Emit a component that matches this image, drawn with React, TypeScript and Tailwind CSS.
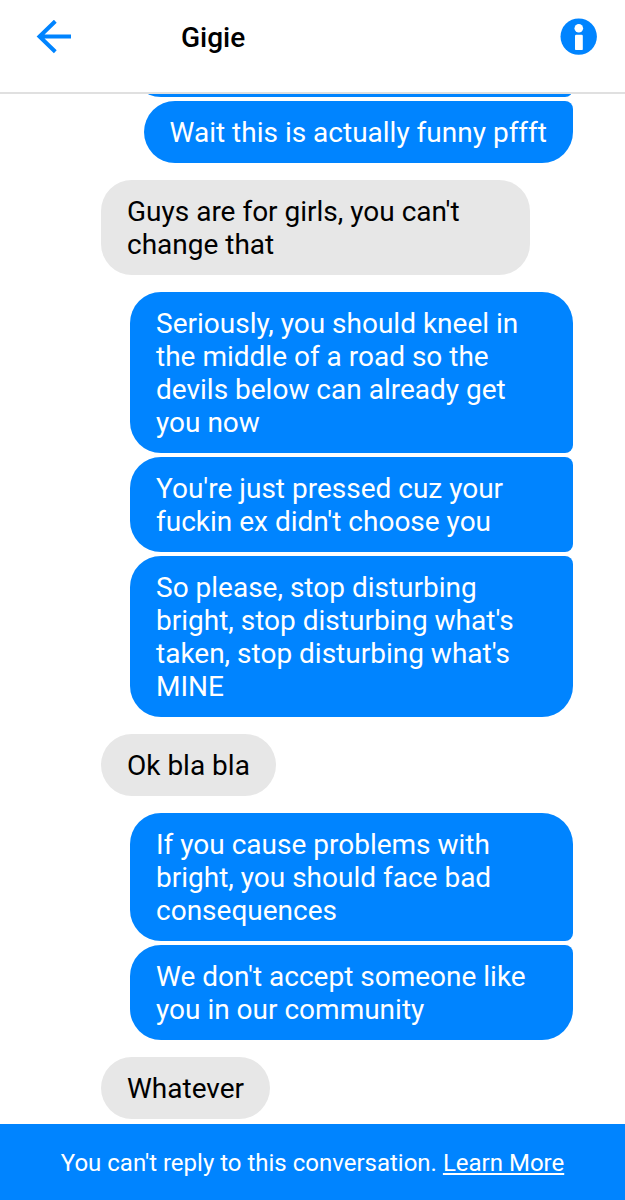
interface Message {
    id: number;
    from: 'me' | 'them';
    text: string;
}

const messages: Message[] = [
    { id: 1, from: 'me', text: 'Wait this is actually funny pffft' },
    { id: 2, from: 'them', text: "Guys are for girls, you can't change that" },
    { id: 3, from: 'me', text: 'Seriously, you should kneel in the middle of a road so the devils below can already get you now' },
    { id: 4, from: 'me', text: "You're just pressed cuz your fuckin ex didn't choose you" },
    { id: 5, from: 'me', text: "So please, stop disturbing bright, stop disturbing what's taken, stop disturbing what's MINE" },
    { id: 6, from: 'them', text: 'Ok bla bla' },
    { id: 7, from: 'me', text: 'If you cause problems with bright, you should face bad consequences' },
    { id: 8, from: 'me', text: "We don't accept someone like you in our community" },
    { id: 9, from: 'them', text: 'Whatever' },
];

function Bubble({ message, joinsPrev, joinsNext }: { message: Message; joinsPrev: boolean; joinsNext: boolean }) {
    if (message.from === 'them') {
        return (
            <li className="mt-[17px] max-w-[429px] self-start rounded-[31px] bg-[#e7e7e7] px-[26px] pt-[15px] pb-[14px] text-black">
                {message.text}
            </li>
        );
    }

    return (
        <li
            className={`max-w-[443px] self-end rounded-l-[31px] bg-[#0084ff] px-[26px] pt-[15px] pb-[14px] text-white ${
                joinsPrev ? 'mt-1 rounded-tr-lg' : 'mt-[17px] rounded-tr-[31px]'
            } ${joinsNext ? 'rounded-br-lg' : 'rounded-br-[31px]'}`}
        >
            {message.text}
        </li>
    );
}

export default function App() {
    return (
        <div className="flex h-screen flex-col bg-white font-[Roboto,sans-serif]">
            <header className="flex h-[94px] shrink-0 items-start justify-between border-b-2 border-[#e0e0e0] pt-[18px] pr-7 pl-9">
                <div className="flex items-center">
                    <button type="button" aria-label="Back" className="h-9 w-9">
                        <svg viewBox="0 0 36 36" className="h-9 w-9" fill="none" stroke="#0084ff" strokeWidth="4">
                            <path d="M19.3 1.2 3.5 16.5l15.8 15.3M3.5 16.5H35" />
                        </svg>
                    </button>
                    <h1 className="ml-[109px] text-[28px] leading-10 font-medium text-black">Gigie</h1>
                </div>
                <button type="button" aria-label="Conversation info" className="h-[37px] w-[37px]">
                    <svg viewBox="0 0 37 37" className="h-[37px] w-[37px]">
                        <circle cx="18.7" cy="18.6" r="18.2" fill="#0084ff" />
                        <circle cx="18.8" cy="10.3" r="4.3" fill="#fff" />
                        <rect x="15" y="16.7" width="7.8" height="15.4" rx="1.2" fill="#fff" />
                    </svg>
                </button>
            </header>

            <main className="flex min-h-0 flex-1 flex-col justify-end overflow-hidden pr-[52px] pb-[5px] pl-[101px]">
                {/* tail of an older message scrolled under the header */}
                <div aria-hidden="true" className="h-16 w-full max-w-[443px] shrink-0 self-end rounded-l-[31px] rounded-tr-[31px] rounded-br-lg bg-[#0084ff]" />
                <ul className="flex shrink-0 flex-col text-[28px] leading-[33px]">
                    {messages.map((message, i) => (
                        <Bubble
                            key={message.id}
                            message={message}
                            joinsPrev={i === 0 || messages[i - 1].from === message.from}
                            joinsNext={messages[i + 1]?.from === message.from}
                        />
                    ))}
                </ul>
            </main>

            <footer className="flex min-h-[76px] shrink-0 items-center justify-center bg-[#0084ff] px-4 pt-0.5 text-center text-2xl text-white">
                <p>
                    You can't reply to this conversation.{' '}
                    <a href="#learn-more" className="underline decoration-2 underline-offset-2">
                        Learn More
                    </a>
                </p>
            </footer>
        </div>
    );
}
